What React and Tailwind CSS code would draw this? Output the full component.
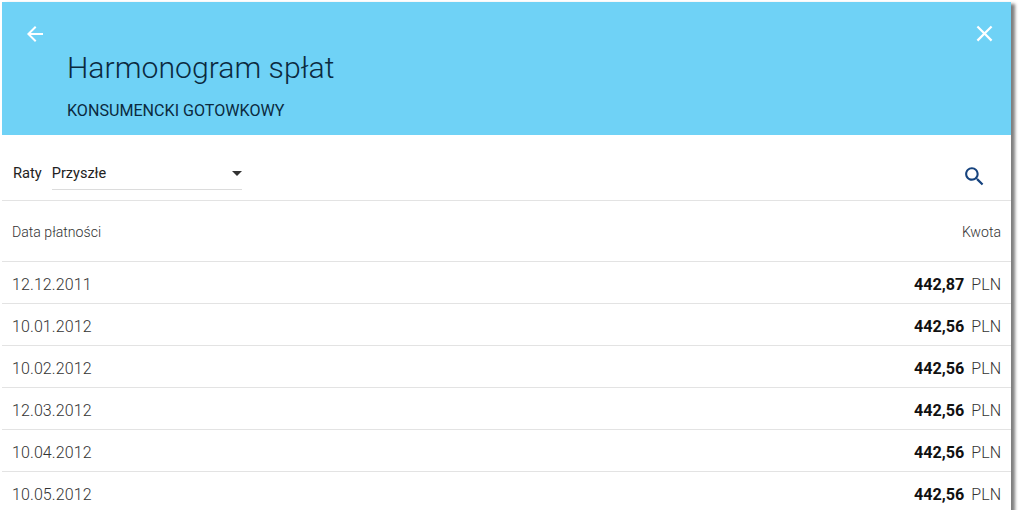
const rows = [
  { date: '12.12.2011', amount: '442,87' },
  { date: '10.01.2012', amount: '442,56' },
  { date: '10.02.2012', amount: '442,56' },
  { date: '12.03.2012', amount: '442,56' },
  { date: '10.04.2012', amount: '442,56' },
  { date: '10.05.2012', amount: '442,56' },
];

function Icon({ d, size, className }) {
  return (
    <svg width={size} height={size} viewBox="0 0 24 24" fill="currentColor" className={className}>
      <path d={d} />
    </svg>
  );
}

export default function App() {
  return (
    <div className="h-[510px] w-[1024px] overflow-hidden bg-white font-['Roboto',sans-serif] pt-[2px] pl-[2px]">
      <div className="w-[1009px] h-[520px] bg-white shadow-[4px_2px_3px_rgba(0,0,0,0.5)]">
        <header className="h-[133px] bg-[#6fd2f6] flex justify-between">
          <div className="pt-[20px] pl-[21px]">
            <Icon
              size={24}
              className="text-white"
              d="M20 11H7.83l5.59-5.59L12 4l-8 8 8 8 1.41-1.41L7.83 13H20v-2z"
            />
            <div className="pl-[44px]">
              <h1 className="mt-[2px] text-[30.2px] leading-[40px] font-light text-[#0b2a3f]">Harmonogram spłat</h1>
              <p className="mt-[13px] text-[16.1px] leading-[20px] text-[#0b2a3f]">KONSUMENCKI GOTOWKOWY</p>
            </div>
          </div>
          <div className="pt-[18px] pr-[13px]">
            <Icon
              size={27}
              className="text-white"
              d="M19 6.41L17.59 5 12 10.59 6.41 5 5 6.41 10.59 12 5 17.59 6.41 19 12 13.41 17.59 19 19 17.59 13.41 12z"
            />
          </div>
        </header>

        <div className="h-[66px] flex items-center justify-between border-b border-[#e3e3e3] pl-[11px] pr-[24px]">
          <div className="flex items-center gap-[10px] pt-[11px]">
            <span className="text-[14.7px] text-[#222] mt-[1px]">Raty</span>
            <div className="w-[190px] h-[34px] pt-[1px] flex items-center justify-between border-b border-[#dcdcdc]">
              <span className="text-[14.5px] text-[#222] mt-[1px]">Przyszłe</span>
              <span className="w-0 h-0 border-x-[5px] border-x-transparent border-t-[5px] border-t-[#333]" />
            </div>
          </div>
          <Icon
            size={25}
            className="text-[#16437e] mt-[18px]"
            d="M15.5 14h-.79l-.28-.27C15.41 12.59 16 11.11 16 9.5 16 5.91 13.09 3 9.5 3S3 5.91 3 9.5 5.91 16 9.5 16c1.61 0 3.09-.59 4.23-1.57l.27.28v.79l5 4.99L20.49 19l-4.99-5zm-6 0C7.01 14 5 11.99 5 9.5S7.01 5 9.5 5 14 7.01 14 9.5 11.99 14 9.5 14z"
          />
        </div>

        <div className="h-[61px] flex items-center justify-between border-b border-[#e3e3e3] px-[10px] pt-[4px]">
          <span className="text-[14.1px] font-light text-[#333]">Data płatności</span>
          <span className="text-[14.1px] font-light text-[#333]">Kwota</span>
        </div>

        {rows.map((row) => (
          <div key={row.date} className="h-[42px] flex items-center justify-between border-b border-[#e3e3e3] px-[10px] pt-[4px]">
            <span className="text-[16px] font-light text-[#333] tracking-[0.1px]">{row.date}</span>
            <span className="flex items-center gap-[7px] mt-[2px]">
              <span className="text-[16.2px] font-bold text-[#111]">{row.amount}</span>
              <span className="text-[16px] font-light text-[#333]">PLN</span>
            </span>
          </div>
        ))}
      </div>
    </div>
  );
}
